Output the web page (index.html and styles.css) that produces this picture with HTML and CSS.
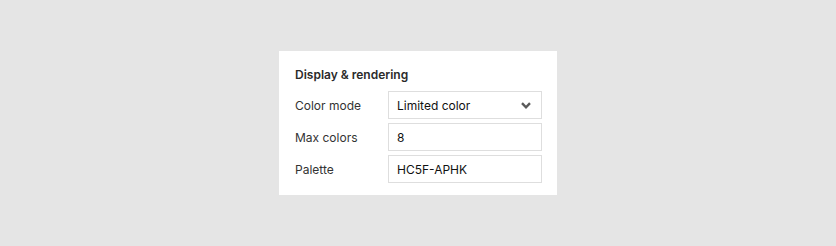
FILE: index.html
```html
<!DOCTYPE html>
<html lang="en">
<head>
    <meta charset="UTF-8">
    <title>Display & rendering</title>
    <link rel="stylesheet" href="styles.css">
</head>
<body>
<div class="wrap">
    <div class="panel">
        <h3 class="title">Display &amp; rendering</h3>
        <div class="form">
            <label class="lbl">Color mode</label>
            <div class="select">
                <span>Limited color</span>
                <svg class="chev" width="10" height="7" viewBox="0 0 10 7"><path d="M1 1.2 5 5.3l4-4.1" fill="none" stroke="#5a5a5a" stroke-width="2.4"/></svg>
            </div>
            <label class="lbl">Max colors</label>
            <div class="field">8</div>
            <label class="lbl">Palette</label>
            <div class="field">HC5F-APHK</div>
        </div>
    </div>
</div>
</body>
</html>
```

FILE: styles.css
```css
*{
    margin:0;
    padding:0;
    box-sizing: border-box;
}
html,body{
    height: 100%;
}
body{
    background: #e5e5e5;
    font-family: Inter, "Noto Sans", sans-serif;
    font-size: 12px;
    color: #222;
}
.wrap{
    padding: 51px 0 0 279px;
}
.panel{
    width: 278px;
    height: 144px;
    background: #fff;
    padding: 16px 15px 12px 16px;
}
.title{
    font-size: 12px;
    font-weight: 600;
    line-height: 16px;
    color: #2a2a2a;
    margin-bottom: 8px;
}
.form{
    display: grid;
    grid-template-columns: 93px 1fr;
    row-gap: 4px;
    align-items: center;
}
.lbl{
    color: #333;
}
.select,.field{
    height: 28px;
    border: 1px solid #dedede;
    padding: 0 8px;
    display: flex;
    align-items: center;
    color: #111;
}
.select{
    justify-content: space-between;
    padding-right: 10px;
}
```
